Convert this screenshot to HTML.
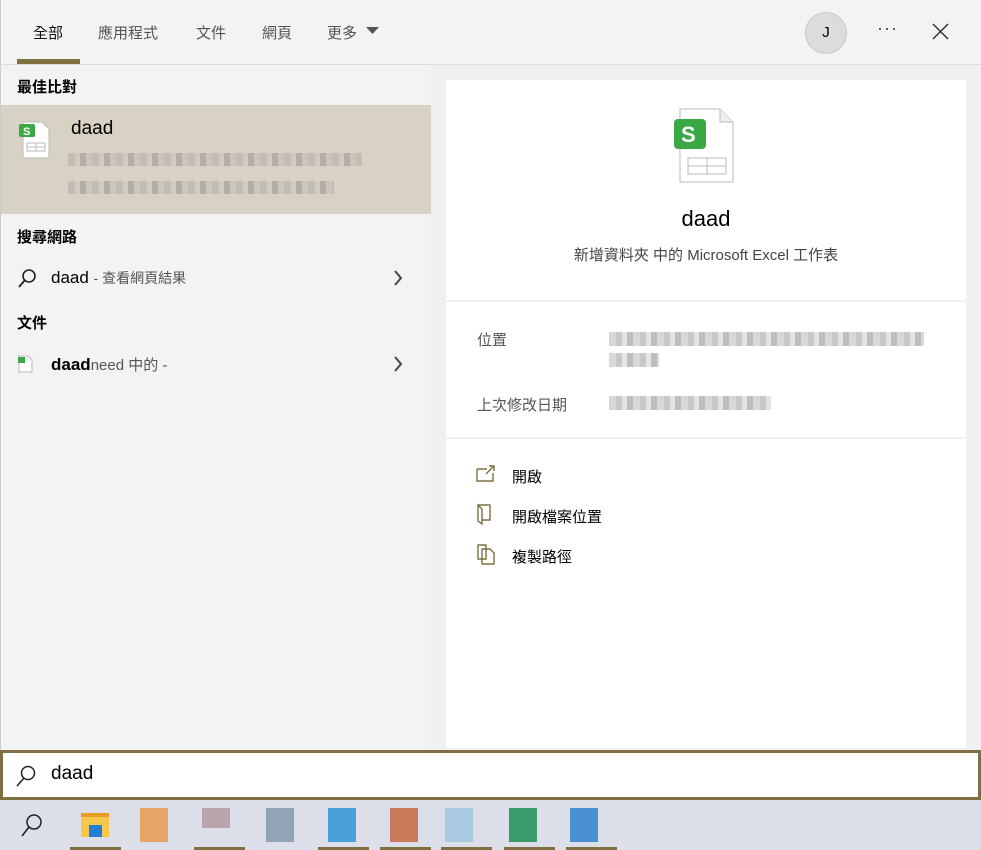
<!DOCTYPE html>
<html><head><meta charset="utf-8"><style>
*{margin:0;padding:0;box-sizing:border-box}
body{width:981px;height:850px;overflow:hidden;background:#f3f3f3;font-family:"Liberation Sans","Noto Sans CJK TC",sans-serif;position:relative;color:#000}
.a{position:absolute}
.blur{position:absolute;background:repeating-linear-gradient(90deg,#bdb8ae 0 7px,#cfcac0 7px 12px,#aaa59c 12px 18px,#c8c3b9 18px 24px);opacity:.8}
.blur2{position:absolute;background:repeating-linear-gradient(90deg,#d8d8d8 0 7px,#c8c8c8 7px 13px,#e4e4e4 13px 18px,#bdbdbd 18px 24px)}
.tab{position:absolute;top:22px;font-size:15px;color:#555}
.tb{position:absolute;top:808px;width:28px;height:34px}
.ul{position:absolute;top:847px;height:3px;width:51px;background:#7e7040}
</style></head><body>
<div class="a" style="left:0;top:0;width:1px;height:850px;background:#ccc"></div>
<div class="tab" style="left:33px;color:#111">全部</div>
<div class="tab" style="left:98px">應用程式</div>
<div class="tab" style="left:196px">文件</div>
<div class="tab" style="left:262px">網頁</div>
<div class="tab" style="left:327px">更多</div>
<svg class="a" style="left:366px;top:27px" width="14" height="8"><path d="M0 0h13l-6.5 7z" fill="#555"/></svg>
<div class="a" style="left:17px;top:59px;width:63px;height:5px;background:#7e7040"></div>
<div class="a" style="left:0;top:64px;width:981px;height:1px;background:#dcdcdc"></div>
<div class="a" style="left:805px;top:12px;width:42px;height:42px;border-radius:50%;background:#dcdcdc;border:1px solid #c8c8c8;font-size:15px;text-align:center;line-height:40px">J</div>
<div class="a" style="left:877px;top:18px;font-size:18px;color:#444;letter-spacing:1px">···</div>
<svg class="a" style="left:932px;top:23px" width="17" height="17"><path d="M1 1L16 16M16 1L1 16" stroke="#333" stroke-width="1.5"/></svg>

<div class="a" style="left:17px;top:76px;font-size:15px;font-weight:bold">最佳比對</div>
<div class="a" style="left:1px;top:105px;width:430px;height:109px;background:#d8d2c4"></div>
<svg class="a" style="left:19px;top:121px" width="32" height="38"><path d="M4 1h19l7 7v29H4z" fill="#fff" stroke="#bbb"/><rect x="0" y="3" width="16" height="13" rx="2" fill="#3aa845"/><text x="4" y="14" font-size="11" fill="#fff" font-weight="bold" font-family="Liberation Sans">S</text><path d="M8 22h18v8H8zM8 26h18M17 22v8" fill="none" stroke="#bbb"/></svg>
<div class="a" style="left:71px;top:118px;font-size:19px">daad</div>
<div class="blur" style="left:68px;top:153px;width:294px;height:13px"></div>
<div class="blur" style="left:68px;top:181px;width:266px;height:13px"></div>

<div class="a" style="left:17px;top:226px;font-size:15px;font-weight:bold">搜尋網路</div>
<svg class="a" style="left:17px;top:268px" width="20" height="20"><circle cx="12" cy="8" r="6" fill="none" stroke="#222" stroke-width="1.6"/><path d="M8 12L2 19" stroke="#222" stroke-width="1.8"/></svg>
<div class="a" style="left:51px;top:268px;font-size:17px">daad <span style="font-size:14px;color:#555">- 查看網頁結果</span></div>
<svg class="a" style="left:393px;top:270px" width="10" height="16"><path d="M2 1l6 7-6 7" fill="none" stroke="#444" stroke-width="2"/></svg>
<div class="a" style="left:17px;top:312px;font-size:15px;font-weight:bold">文件</div>
<svg class="a" style="left:17px;top:355px" width="16" height="18"><path d="M2 1h9l4 4v12H2z" fill="#fff" stroke="#bbb"/><rect x="1" y="2" width="7" height="6" fill="#3aa845"/></svg>
<div class="a" style="left:51px;top:354px;font-size:17px"><b>daad</b><span style="font-size:15px;color:#555">need 中的 -</span></div>
<svg class="a" style="left:393px;top:356px" width="10" height="16"><path d="M2 1l6 7-6 7" fill="none" stroke="#444" stroke-width="2"/></svg>

<div class="a" style="left:431px;top:65px;width:550px;height:685px;background:#f0f0f0"></div>
<div class="a" style="left:446px;top:80px;width:520px;height:668px;background:#fff"></div>
<div class="a" style="left:446px;top:300px;width:520px;height:2px;background:#f0f0f0"></div>
<div class="a" style="left:446px;top:437px;width:520px;height:2px;background:#f0f0f0"></div>
<svg class="a" style="left:672px;top:108px" width="64" height="76"><path d="M8 1h40l13 13v60H8z" fill="#fff" stroke="#bbb"/><path d="M48 1v13h13" fill="#eee" stroke="#bbb"/><rect x="2" y="11" width="32" height="30" rx="4" fill="#3aa845"/><text x="9" y="34" font-size="22" fill="#fff" font-weight="bold" font-family="Liberation Sans">S</text><path d="M16 50h38v16H16zM16 58h38M35 50v16" fill="none" stroke="#bbb"/></svg>
<div class="a" style="left:446px;top:206px;width:520px;text-align:center;font-size:22px">daad</div>
<div class="a" style="left:446px;top:244px;width:520px;text-align:center;font-size:15px;color:#444">新增資料夾 中的 Microsoft Excel 工作表</div>
<div class="a" style="left:477px;top:329px;font-size:15px;color:#555">位置</div>
<div class="blur2" style="left:609px;top:332px;width:315px;height:14px"></div>
<div class="blur2" style="left:609px;top:353px;width:50px;height:14px"></div>
<div class="a" style="left:477px;top:394px;font-size:15px;color:#555">上次修改日期</div>
<div class="blur2" style="left:609px;top:396px;width:162px;height:14px"></div>
<svg class="a" style="left:476px;top:464px" width="20" height="18"><path d="M1 5h10M1 5v12h16v-8M10 10l8-8M13 2h5v5" fill="none" stroke="#7e7040" stroke-width="1.4"/></svg>
<div class="a" style="left:512px;top:466px;font-size:15px">開啟</div>
<svg class="a" style="left:476px;top:503px" width="20" height="22"><path d="M2 2l4 4v15l-4-3zM2 2h12v15H6" fill="none" stroke="#7e7040" stroke-width="1.4"/></svg>
<div class="a" style="left:512px;top:506px;font-size:15px">開啟檔案位置</div>
<svg class="a" style="left:476px;top:543px" width="20" height="22"><path d="M2 2h8v14H2zM6 6h8l4 4v11H6z" fill="none" stroke="#7e7040" stroke-width="1.4"/></svg>
<div class="a" style="left:512px;top:546px;font-size:15px">複製路徑</div>

<div class="a" style="left:0;top:750px;width:981px;height:50px;background:#fff;border:3px solid #7e7040"></div>
<svg class="a" style="left:15px;top:764px" width="22" height="24"><circle cx="13" cy="9" r="6.5" fill="none" stroke="#222" stroke-width="1.5"/><path d="M9 14L2 22" stroke="#222" stroke-width="1.6"/></svg>
<div class="a" style="left:51px;top:763px;font-size:19px">daad</div>

<div class="a" style="left:0;top:800px;width:981px;height:50px;background:#dcdfe9"></div>
<svg class="a" style="left:20px;top:812px" width="24" height="26"><circle cx="14" cy="10" r="7" fill="none" stroke="#222" stroke-width="1.5"/><path d="M9 15L2 24" stroke="#222" stroke-width="1.6"/></svg>
<div class="tb" style="left:81px;top:813px;width:28px;height:24px;background:#f5c84c;border-top:4px solid #e89d2a"></div>
<div class="a" style="left:89px;top:825px;width:13px;height:12px;background:#1e7fd8"></div>
<div class="tb" style="left:140px;background:#e99642;opacity:.8"></div>
<div class="tb" style="left:202px;width:28px;height:20px;background:#b9a3ad"></div>
<div class="tb" style="left:266px;background:#7d95a8;opacity:.8"></div>
<div class="tb" style="left:328px;background:#4aa0d8"></div>
<div class="tb" style="left:390px;background:#c97a5a"></div>
<div class="tb" style="left:445px;background:#a9c9e2"></div>
<div class="tb" style="left:509px;background:#3a9a6a"></div>
<div class="tb" style="left:570px;background:#4a8fd0"></div>
<div class="ul" style="left:70px"></div><div class="ul" style="left:194px"></div><div class="ul" style="left:318px"></div><div class="ul" style="left:380px"></div><div class="ul" style="left:441px"></div><div class="ul" style="left:504px"></div><div class="ul" style="left:566px"></div>
</body></html>
